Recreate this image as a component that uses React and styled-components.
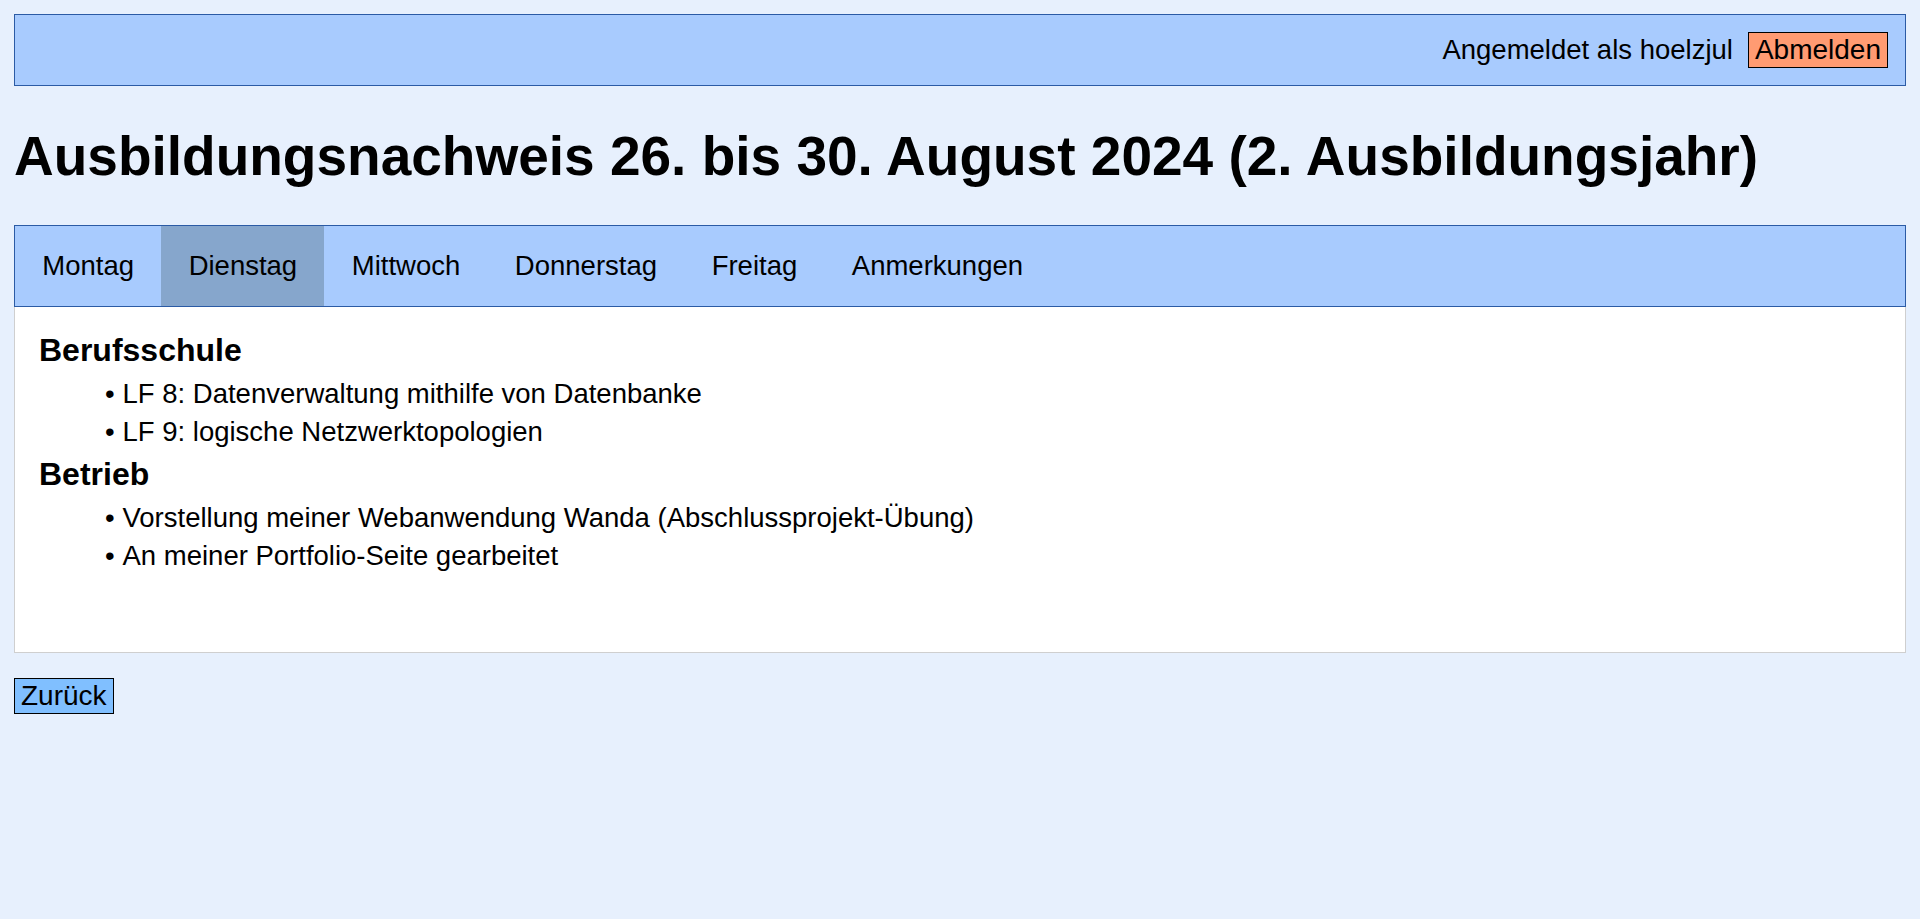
import React, { useState } from "react";
import styled, { createGlobalStyle } from "styled-components";

const GlobalStyle = createGlobalStyle`
  html, body {
    margin: 0;
    padding: 0;
    background: #e7f0fd;
    color: #000;
    font-family: "Liberation Sans", Arial, sans-serif;
  }
  * { box-sizing: border-box; }
`;

const Page = styled.div`
  padding: 14px;
  min-height: 919px;
`;

const TopBar = styled.header`
  display: flex;
  justify-content: flex-end;
  align-items: center;
  gap: 15px;
  height: 72px;
  padding: 0 17px;
  background: #a8cbfe;
  border: 1px solid #2b5ba5;
`;

const UserText = styled.span`
  font-size: 27.5px;
  line-height: normal;
`;

const Button = styled.button`
  font-family: "Liberation Sans", Arial, sans-serif;
  font-size: 28px;
  line-height: normal;
  color: #000;
  background: ${(p) => p.$bg};
  border: 1px solid #000;
  border-radius: 0;
  padding: 1px 6px;
  margin: 0;
  cursor: pointer;
`;

const Title = styled.h1`
  font-size: 55px;
  font-weight: bold;
  line-height: 64px;
  margin: 37.5px 0;
`;

const TabBar = styled.nav`
  display: flex;
  background: #a8cbfe;
  border: 1px solid #2b5ba5;
`;

const Tab = styled.div`
  padding: 24px 27.3px;
  font-size: 27.5px;
  line-height: 32px;
  background: ${(p) => (p.$active ? "#86a6cc" : "transparent")};
  cursor: pointer;
`;

const Panel = styled.section`
  background: #fff;
  border: 1px solid #cfcfcf;
  border-top: none;
  min-height: 346px;
  padding: 19px 24px;
`;

const SectionTitle = styled.h3`
  font-size: 32px;
  font-weight: bold;
  line-height: 49px;
  margin: 0;
`;

const List = styled.ul`
  list-style: none;
  margin: 0;
  padding: 0 0 0 66px;
`;

const Item = styled.li`
  font-size: 27.5px;
  line-height: 37.5px;
  &::before {
    content: "•";
    display: inline-block;
    width: 17.5px;
  }
`;

const Footer = styled.div`
  margin-top: 25px;
`;

const days = ["Montag", "Dienstag", "Mittwoch", "Donnerstag", "Freitag", "Anmerkungen"];

const sections = [
  {
    title: "Berufsschule",
    items: [
      "LF 8: Datenverwaltung mithilfe von Datenbanke",
      "LF 9: logische Netzwerktopologien",
    ],
  },
  {
    title: "Betrieb",
    items: [
      "Vorstellung meiner Webanwendung Wanda (Abschlussprojekt-Übung)",
      "An meiner Portfolio-Seite gearbeitet",
    ],
  },
];

export default function App() {
  const [active, setActive] = useState("Dienstag");
  return (
    <>
      <GlobalStyle />
      <Page>
        <TopBar>
          <UserText>Angemeldet als hoelzjul</UserText>
          <Button $bg="#ff9b72">Abmelden</Button>
        </TopBar>
        <Title>Ausbildungsnachweis 26. bis 30. August 2024 (2. Ausbildungsjahr)</Title>
        <TabBar>
          {days.map((d) => (
            <Tab key={d} $active={d === active} onClick={() => setActive(d)}>
              {d}
            </Tab>
          ))}
        </TabBar>
        <Panel>
          {sections.map((s) => (
            <React.Fragment key={s.title}>
              <SectionTitle>{s.title}</SectionTitle>
              <List>
                {s.items.map((it) => (
                  <Item key={it}>{it}</Item>
                ))}
              </List>
            </React.Fragment>
          ))}
        </Panel>
        <Footer>
          <Button $bg="#80bfff">Zurück</Button>
        </Footer>
      </Page>
    </>
  );
}
